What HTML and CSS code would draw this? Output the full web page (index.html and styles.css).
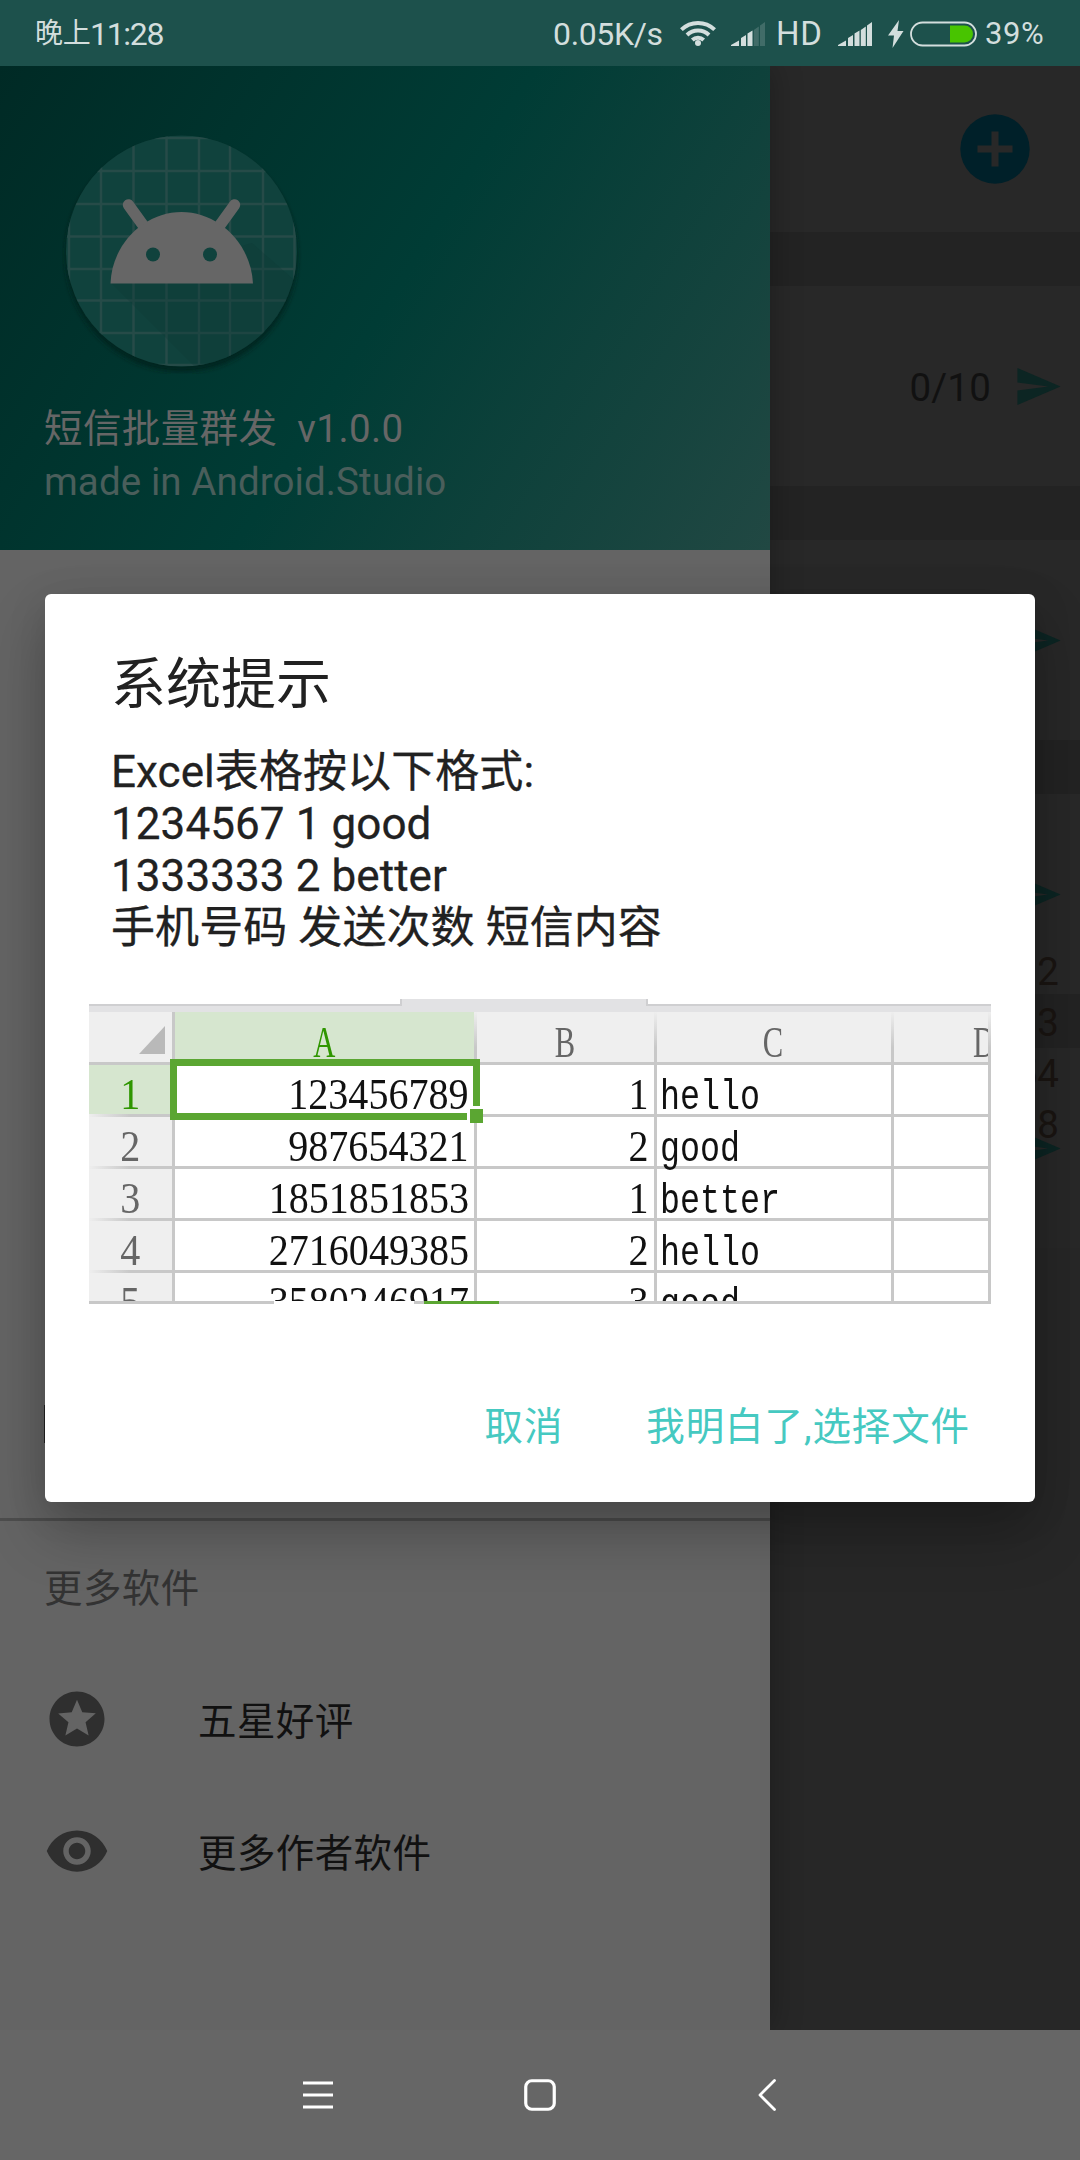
FILE: index.html
```html
<!DOCTYPE html>
<html lang="zh-CN">
<head>
<meta charset="utf-8">
<title>短信批量群发</title>
<link rel="stylesheet" href="styles.css">
</head>
<body>
<div class="phone">
  <header class="status">
    <div class="clock"><span class="clock-cn">晚上</span><span>11:28</span></div>
    <div class="indicators">
      <span class="speed">0.05K/s</span>
      <svg class="wifi" width="36" height="28" viewBox="0 0 36 28" fill="none" stroke="#d3dedd" stroke-width="4">
        <path d="M1.4 10.6a24 24 0 0 1 33.2 0"/><path d="M7 16a16 16 0 0 1 22 0"/><path d="M12.3 21a8.5 8.5 0 0 1 11.4 0"/><circle cx="18" cy="24" r="3" fill="#d3dedd" stroke="none"/>
      </svg>
      <svg class="signal" width="34" height="24" viewBox="0 0 34 24" fill="#d3dedd">
        <path d="M0 24v-1l8-4.5V24zM10 24v-8l5-3v11zM16.500 24V11.500l5-3V24z"/><path opacity=".2" d="M22.800 24V8l5-3.500V24zM29 24V3.500L34 0v24z"/>
      </svg>
      <span class="hd">HD</span>
      <svg class="signal" width="34" height="24" viewBox="0 0 34 24" fill="#d3dedd">
        <path d="M0 24v-1l8-4.500V24zM10 24v-8l5-3v11zM16.500 24V11.500l5-3V24zM22.800 24V8l5-3.500V24zM29 24V3.500L34 0v24z"/>
      </svg>
      <svg class="bolt" width="16" height="28" viewBox="0 0 16 28" fill="#d3dedd"><path d="M11 0 0 15.500h6L4.500 28 15.500 11H9.500z"/></svg>
      <svg class="battery" width="67" height="26" viewBox="0 0 67 26">
        <rect x="1" y="1.500" width="65" height="23" rx="11.500" fill="none" stroke="#d3dedd" stroke-width="1.800"/>
        <path d="M40 4.500h14.500a8.500 8.500 0 0 1 0 17H40z" fill="#48c400"/>
      </svg>
      <span class="percent">39%</span>
    </div>
  </header>

  <div class="stage">
    <main class="page">
      <section class="card card-top">
        <svg width="70" height="70" viewBox="0 0 70 70"><circle cx="35" cy="35" r="34.700" fill="#002029"/><path d="M31.500 17.500h7v14h14v7h-14v14h-7v-14h-14v-7h14z" fill="#282828"/></svg>
      </section>
      <section class="card card-row"><span class="count">0/10</span><svg class="send" viewBox="0 0 21 18"><path d="M0 0v7l15 2-15 2v7l21-9z"/></svg></section>
      <section class="card card-row"><svg class="send" viewBox="0 0 21 18"><path d="M0 0v7l15 2-15 2v7l21-9z"/></svg></section>
      <section class="card card-row"><svg class="send" viewBox="0 0 21 18"><path d="M0 0v7l15 2-15 2v7l21-9z"/></svg></section>
      <section class="card card-row"><svg class="send" viewBox="0 0 21 18"><path d="M0 0v7l15 2-15 2v7l21-9z"/></svg></section>
      <div class="rest"></div>
    </main>

    <div class="totals"><span>2</span><span>13</span><span>54</span><span>8</span></div>

    <aside class="drawer">
      <div class="drawer-head">
        <svg class="logo" width="240" height="244" viewBox="62 130 240 244">
          <defs>
            <clipPath id="disc"><circle cx="181.500" cy="251" r="115.500"/></clipPath>
            <filter id="soft" x="-10%" y="-10%" width="120%" height="120%"><feGaussianBlur stdDeviation="2"/></filter>
          </defs>
          <circle cx="181.500" cy="256" r="116" fill="#00211d" opacity=".8" filter="url(#soft)"/>
          <circle cx="181.500" cy="251" r="115.500" fill="#10423d"/>
          <g clip-path="url(#disc)">
            <path d="M69 130v244M101 130v244M133.500 130v244M166.500 130v244M199 130v244M230 130v244M263 130v244M294.500 130v244M62 138h240M62 171h240M62 204h240M62 236.500h240M62 269h240M62 300.500h240M62 333h240M62 365h240" stroke="#264b48" stroke-width="2.500"/>
            <path d="M111 283 199 371h110V293l-57-50z" fill="#0c3834" opacity=".3"/>
          </g>
          <path d="M128.500 205 148 232M234.500 205 215 232" stroke="#666" stroke-width="11.500" stroke-linecap="round"/>
          <path d="M110.500 283.500C112 243 145 212 181.500 212s69.500 31 71.500 71.500z" fill="#666"/>
          <circle cx="153" cy="254.500" r="7" fill="#10423d"/><circle cx="210" cy="254.500" r="7" fill="#10423d"/>
        </svg>
        <div class="app-name">短信批量群发&nbsp; v1.0.0</div>
        <div class="app-sub">made in Android.Studio</div>
      </div>
      <div class="drawer-body"><i class="menu-icon"></i></div>
      <div class="group-title">更多软件</div>
      <div class="item">
        <svg width="66" height="66" viewBox="0 0 24 24" fill="#2f2f2f"><path d="M11.990 2C6.470 2 2 6.480 2 12s4.470 10 9.990 10C17.520 22 22 17.520 22 12S17.520 2 11.990 2zm4.240 16L12 15.450 7.770 18l1.120-4.810-3.730-3.230 4.920-.42L12 5l1.920 4.530 4.920.42-3.730 3.230L16.230 18z"/></svg>
        <span>五星好评</span>
      </div>
      <div class="item">
        <svg width="66" height="66" viewBox="0 0 24 24" fill="#2f2f2f"><path d="M12 4.500C7 4.500 2.730 7.610 1 12c1.730 4.390 6 7.500 11 7.500s9.270-3.110 11-7.500c-1.730-4.390-6-7.500-11-7.500zM12 17c-2.760 0-5-2.240-5-5s2.240-5 5-5 5 2.240 5 5-2.240 5-5 5zm0-8c-1.660 0-3 1.340-3 3s1.340 3 3 3 3-1.340 3-3-1.340-3-3-3z"/></svg>
        <span>更多作者软件</span>
      </div>
    </aside>

    <div class="dialog">
      <h1>系统提示</h1>
      <p>Excel表格按以下格式:<br>1234567 1 good<br>1333333 2 better<br>手机号码 发送次数 短信内容</p>
      <div class="sheet">
        <div class="tabs"><i></i><i class="gap"></i><i></i></div>
        <div class="strip"></div>
        <div class="grid">
          <div class="corner"><svg width="26" height="28" viewBox="0 0 26 28"><path d="M26 0v28H0z" fill="#b9b9b9"/></svg></div>
          <div class="col on"><b>A</b></div><div class="col"><b>B</b></div><div class="col"><b>C</b></div><div class="col last"><b>D</b></div>
          <div class="row on"><b>1</b></div><div class="num picked"><b>123456789</b><i class="handle"></i></div><div class="num"><b>1</b></div><div class="txt"><b>hello</b></div><div class="txt"></div>
          <div class="row"><b>2</b></div><div class="num"><b>987654321</b></div><div class="num"><b>2</b></div><div class="txt"><b>good</b></div><div class="txt"></div>
          <div class="row"><b>3</b></div><div class="num"><b>1851851853</b></div><div class="num"><b>1</b></div><div class="txt"><b>better</b></div><div class="txt"></div>
          <div class="row"><b>4</b></div><div class="num"><b>2716049385</b></div><div class="num"><b>2</b></div><div class="txt"><b>hello</b></div><div class="txt"></div>
          <div class="row"><b>5</b></div><div class="num"><b>3580246917</b></div><div class="num"><b>3</b></div><div class="txt"><b>good</b></div><div class="txt"></div>
        </div>
        <div class="edge"></div>
      </div>
      <div class="actions"><span>取消</span><span>我明白了,选择文件</span></div>
    </div>
  </div>

  <nav class="nav">
    <svg width="30" height="34" viewBox="0 0 30 34"><path d="M0 5h30M0 17h30M0 29h30" stroke="#fff" stroke-width="3"/></svg>
    <svg width="32" height="34" viewBox="0 0 32 34"><rect x="1.750" y="2.750" width="28.500" height="28.500" rx="6" fill="none" stroke="#fff" stroke-width="3.200"/></svg>
    <svg width="18" height="34" viewBox="0 0 18 34"><path d="M16.500 2.500 2 17l14.500 14.500" fill="none" stroke="#fff" stroke-width="2.800" stroke-linecap="round" stroke-linejoin="round"/></svg>
  </nav>
</div>
</body>
</html>
```
FILE: styles.css
```css
* { box-sizing: border-box; }
body { margin: 0; font-family: Roboto, "Noto Sans CJK SC", sans-serif; }
svg { display: block; flex: none; }
.phone { width: 1080px; height: 2160px; display: flex; flex-direction: column; overflow: hidden; background: #666; }

.status { height: 66px; flex: none; background: #1d514c; color: #d3dedd; display: flex; align-items: center; padding-left: 35px; font-size: 32px; line-height: 66px; white-space: nowrap; }
.clock { width: 518px; display: flex; letter-spacing: -1.300px; padding-top: 2px; }
.clock-cn { font-size: 28px; letter-spacing: -.3px; width: 55px; }
.indicators { display: flex; align-items: center; }
.speed { width: 127px; padding-top: 2px; letter-spacing: -.35px; }
.wifi { margin-right: 15px; }
.signal { margin-top: 2px; }
.hd { width: 62px; margin-left: 11px; padding-top: 2px; font-size: 33px; letter-spacing: .6px; }
.bolt { margin-left: 16px; margin-top: 2px; }
.battery { margin-left: 6px; margin-top: 1px; }
.percent { margin-left: 8px; font-size: 31px; padding-top: 1px; letter-spacing: .6px; }

.stage { height: 1964px; flex: none; display: grid; grid-template: 1964px / 1080px; overflow: hidden; }
.stage > * { grid-area: 1 / 1; }

.page { background: #232323; display: flex; flex-direction: column; gap: 54px; }
.card { flex: none; background: #282828; display: flex; align-items: center; justify-content: flex-end; }
.card-top { height: 166px; padding-right: 50px; }
.card-row { height: 200px; padding-right: 19px; gap: 26px; }
.card-top svg { margin-top: -1px; }
.count { font-size: 38.5px; color: #111; letter-spacing: .2px; padding-top: 2px; }
.send { width: 44px; height: 37px; fill: #0c2523; }
.rest { flex: 1; background: #272727; margin-top: -54px; }
.totals { justify-self: end; align-self: start; margin: 880px 21px 0 0; display: flex; flex-direction: column; align-items: flex-end; font-size: 38.5px; line-height: 51px; color: #1a1512; }

.drawer { width: 770px; background: #646464; display: flex; flex-direction: column; box-shadow: 0 0 30px rgba(0,0,0,.28); clip-path: inset(0 -60px 0 0); }
.drawer-head { height: 484px; flex: none; background: linear-gradient(122.200deg, #002a25, #003c35 50%, #214843); padding: 64px 0 0 44px; color: #666; }
.logo { margin-left: 18px; }
.app-name { margin-top: 28px; font-size: 38.5px; line-height: 54px; letter-spacing: .4px; }
.app-sub { font-size: 38.5px; line-height: 52px; letter-spacing: .1px; color: #4a5e5b; }
.drawer-body { flex: none; height: 971px; padding: 855px 0 0 44px; border-bottom: 3px solid #4d4d4d; }
.menu-icon { display: block; width: 40px; height: 38px; background: #222; }
.group-title { height: 132px; flex: none; padding: 2px 0 0 44px; font-size: 38.5px; line-height: 132px; letter-spacing: .4px; color: #333; }
.item { height: 132px; flex: none; padding-left: 44px; display: flex; align-items: center; gap: 88px; font-size: 38.5px; letter-spacing: .4px; color: #111; }
.item span { margin-top: -3px; }

.dialog { z-index: 1; width: 990px; height: 908px; margin: 528px 0 0 45px; background: #fff; border-radius: 6px; box-shadow: 0 30px 60px rgba(0,0,0,.24), 0 8px 40px rgba(0,0,0,.1); display: flex; flex-direction: column; color: #212121; }
h1 { margin: 50px 0 0 66px; font-size: 55px; line-height: 80px; font-weight: 400; }
p { margin: 22px 0 0 66px; font-size: 44px; line-height: 52px; letter-spacing: .08px; -webkit-text-stroke: .3px #212121; }

.sheet { width: 902px; height: 305px; margin: 45px 0 0 44px; overflow: hidden; position: relative; flex: none; display: flex; flex-direction: column; }
.tabs { display: flex; height: 7px; flex: none; }
.tabs i { width: 311px; border-bottom: 2px solid #cfcfd1; background: #fff; }
.tabs i:last-child { flex: 1; }
.tabs .gap { width: 248px; background: #e2e2e4; border: solid #cfcfd1; border-width: 0 2px; }
.strip { height: 6px; flex: none; background: #e2e2e4; }
.grid { display: grid; grid-template-columns: 85.500px 302px 180px 237px 97.500px; grid-template-rows: 52.500px repeat(5, 52.200px); font-size: 45px; line-height: 58px; color: #111; }
.grid > div { border-right: 3px solid #c8c8c8; border-bottom: 3px solid #c8c8c8; height: 100%; }
.grid b { font-family: "Liberation Serif", serif; font-weight: 400; display: inline-block; transform: scaleX(.89); }
.corner { background: #efefef; padding: 14px 0 0 50px; }
.grid .col { background: #efefef; color: #666; text-align: center; border-image: linear-gradient(#efefef, #c8c8c8 70%) 1; line-height: 59px; }
.grid .col b { transform: scaleX(.68); }
.grid .col.on { background: #d6e6cf; color: #2f9600; }
.grid .col.last { text-align: left; overflow: hidden; }
.grid .last b { margin-left: 79px; transform-origin: left; }
.grid .row { background: #efefef; color: #666; text-align: center; border-image: linear-gradient(90deg, #efefef, #c8c8c8 50%) 1; }
.grid .row.on { background: #d6e6cf; color: #2f9600; }
.num { text-align: right; padding-right: 5px; }
.num b { transform-origin: right; }
.txt { padding-left: 3px; }
.grid .txt b { font-family: "Liberation Mono", monospace; font-size: 43px; transform: scaleX(.775); transform-origin: left; }
.grid .picked { position: relative; }
.picked::before { content: ""; position: absolute; left: -5px; right: -6px; top: -6px; bottom: -6px; border: 7.500px solid #5ba632; }
.handle { position: absolute; right: -9px; bottom: -9px; width: 16px; height: 17px; background: #5ba632; border: solid #fff; border-width: 3px 0 0 3px; }
.edge { position: absolute; left: 0; right: 0; bottom: 0; height: 3px; background: linear-gradient(90deg, #c8c8c8 185px, #fff 185px 325px, #c8c8c8 325px 335px, #5ba632 335px 410px, #c8c8c8 410px); }

.actions { display: flex; justify-content: flex-end; gap: 83px; padding-right: 65px; margin-top: 95px; font-size: 38.5px; letter-spacing: .9px; line-height: 56px; color: #46c9c1; }

.nav { flex: none; height: 130px; display: flex; align-items: center; padding-left: 303px; }
.nav svg + svg { margin-left: 191px; }
.nav svg:last-child { margin-left: 202px; }
```
